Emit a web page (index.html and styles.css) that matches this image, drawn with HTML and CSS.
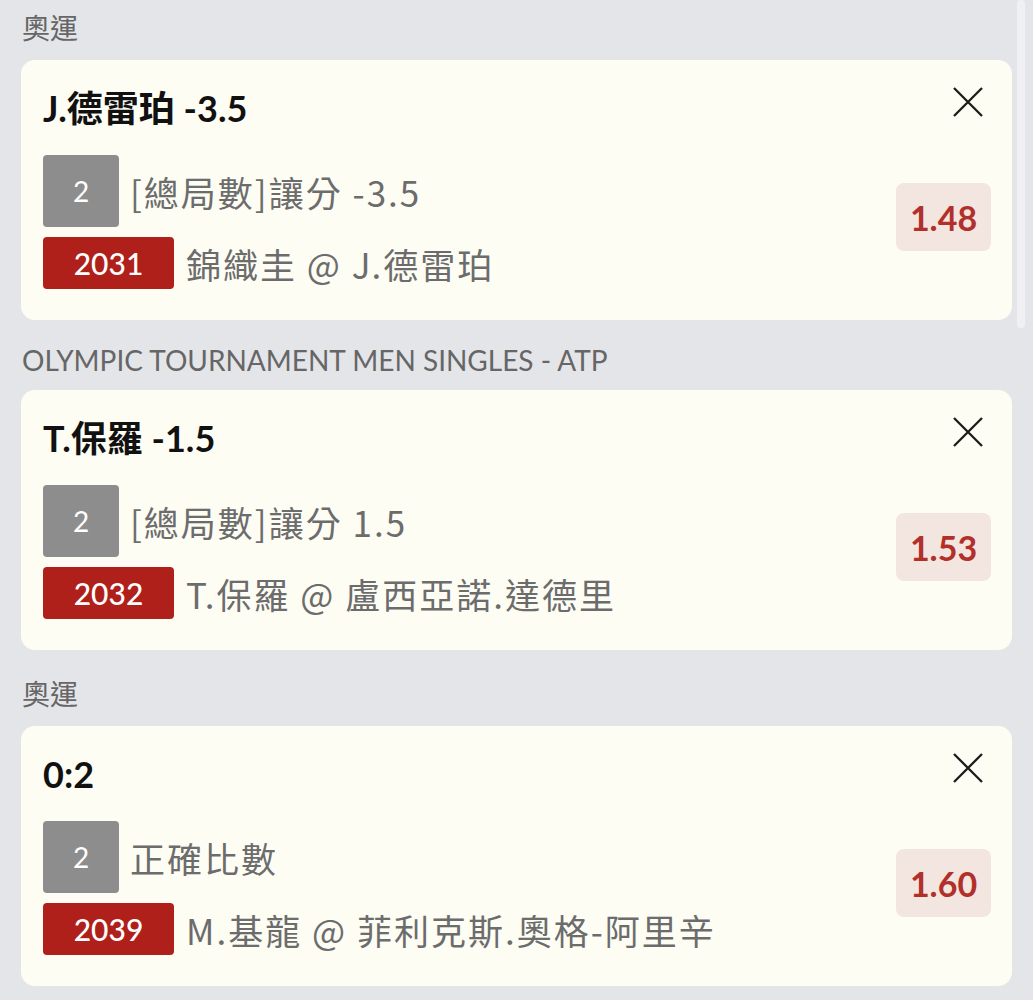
FILE: index.html
```html
<!doctype html>
<html lang="zh-Hant">
<head>
	<meta charset="UTF-8" />
	<title>投注單</title>
	<link rel="stylesheet" href="styles.css">
</head>
<body>
	<div class="page">
		<div class="scroll-thumb"></div>

		<div class="group">
			<div class="group-title first">奧運</div>
			<div class="bet-card">
				<div class="bet-head">
					<div class="bet-name">J.德雷珀 -3.5</div>
					<button class="bet-close" aria-label="刪除">
						<svg viewBox="0 0 32 32" width="32" height="32"><path d="M2 2L30 30M30 2L2 30" /></svg>
					</button>
				</div>
				<div class="bet-body">
					<div class="bet-info">
						<div class="bet-line">
							<span class="tag-type">2</span>
							<span class="bet-text">[總局數]讓分 -3.5</span>
						</div>
						<div class="bet-line">
							<span class="tag-no">2031</span>
							<span class="bet-text">錦織圭 @ J.德雷珀</span>
						</div>
					</div>
					<div class="bet-odds">1.48</div>
				</div>
			</div>
		</div>

		<div class="group">
			<div class="group-title">OLYMPIC TOURNAMENT MEN SINGLES - ATP</div>
			<div class="bet-card">
				<div class="bet-head">
					<div class="bet-name">T.保羅 -1.5</div>
					<button class="bet-close" aria-label="刪除">
						<svg viewBox="0 0 32 32" width="32" height="32"><path d="M2 2L30 30M30 2L2 30" /></svg>
					</button>
				</div>
				<div class="bet-body">
					<div class="bet-info">
						<div class="bet-line">
							<span class="tag-type">2</span>
							<span class="bet-text">[總局數]讓分 1.5</span>
						</div>
						<div class="bet-line">
							<span class="tag-no">2032</span>
							<span class="bet-text">T.保羅 @ 盧西亞諾.達德里</span>
						</div>
					</div>
					<div class="bet-odds">1.53</div>
				</div>
			</div>
		</div>

		<div class="group">
			<div class="group-title">奧運</div>
			<div class="bet-card">
				<div class="bet-head">
					<div class="bet-name">0:2</div>
					<button class="bet-close" aria-label="刪除">
						<svg viewBox="0 0 32 32" width="32" height="32"><path d="M2 2L30 30M30 2L2 30" /></svg>
					</button>
				</div>
				<div class="bet-body">
					<div class="bet-info">
						<div class="bet-line">
							<span class="tag-type">2</span>
							<span class="bet-text">正確比數</span>
						</div>
						<div class="bet-line">
							<span class="tag-no">2039</span>
							<span class="bet-text">M.基龍 @ 菲利克斯.奧格-阿里辛</span>
						</div>
					</div>
					<div class="bet-odds">1.60</div>
				</div>
			</div>
		</div>
	</div>
</body>
</html>
```

FILE: styles.css
```css
html,body{margin: 0;padding: 0;}
body{background: #e4e5e9;font-family: Lato, "Noto Sans CJK TC", sans-serif;}

.page{position: relative;height: 100vh;overflow: hidden;}
.scroll-thumb{position: absolute;top: 0;right: 8px;width: 8px;height: 328px;background: #f0f0f4;border-radius: 4px;}

/* 分組標題 */
.group-title{padding: 23px 22px 13px;font-size: 28px;color: #666;}
.group-title.first{padding-top: 7px;}

/* 注項卡片 */
.bet-card{margin: 0 21px;padding: 28px 21px 31px 22px;background: #fdfdf4;border-radius: 14px;}
.bet-head{display: flex;justify-content: space-between;align-items: flex-start;}
.bet-name{font-size: 36px;line-height: 40px;font-weight: bold;color: #111;}
.bet-close{margin: -2px 7px 0 0;padding: 0;width: 32px;height: 32px;border: 0;background: none;}
.bet-close svg{display: block;}
.bet-close path{stroke: #1c1c1c;stroke-width: 2.3;fill: none;}

.bet-body{display: flex;align-items: center;justify-content: space-between;margin-top: 27px;}
.bet-info{display: flex;flex-direction: column;gap: 10px;}
.bet-line{display: flex;align-items: center;}
.bet-text{font-family: "Noto Sans CJK TC", sans-serif;font-size: 35px;letter-spacing: 2px;color: #6c6c6c;white-space: nowrap;}

.tag-type,.tag-no{display: flex;align-items: center;justify-content: center;flex: none;color: #fff;font-family: Lato, sans-serif;border-radius: 4px;}
.tag-type{width: 76px;height: 72px;margin-right: 11px;background: #8d8d8d;font-size: 28px;}
.tag-no{width: 131px;height: 52px;margin-right: 12px;background: #b0201a;font-size: 30px;font-weight: 500;}

.bet-odds{width: 95px;height: 68px;margin-bottom: 10px;display: flex;align-items: center;justify-content: center;background: #f3e5df;border-radius: 8px;color: #b2302a;font-size: 34px;font-weight: bold;}
```
